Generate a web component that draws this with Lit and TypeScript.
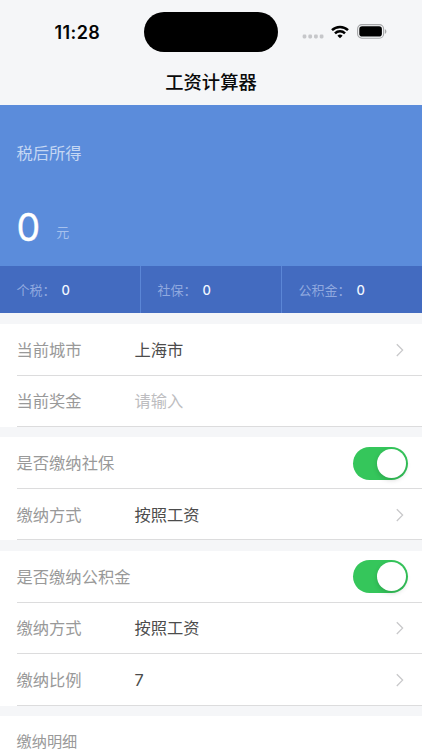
import { LitElement, html, css, svg, nothing } from "lit";
import { customElement, property } from "lit/decorators.js";

type Row = { label: string; value?: string; placeholder?: string; kind: "link" | "input" | "switch" };

const stats = [
  { label: "个税：", value: "0" },
  { label: "社保：", value: "0" },
  { label: "公积金：", value: "0" },
];

const groups: Row[][] = [
  [
    { label: "当前城市", value: "上海市", kind: "link" },
    { label: "当前奖金", placeholder: "请输入", kind: "input" },
  ],
  [
    { label: "是否缴纳社保", kind: "switch" },
    { label: "缴纳方式", value: "按照工资", kind: "link" },
  ],
  [
    { label: "是否缴纳公积金", kind: "switch" },
    { label: "缴纳方式", value: "按照工资", kind: "link" },
    { label: "缴纳比例", value: "7", kind: "link" },
  ],
];

@customElement("status-bar")
class StatusBar extends LitElement {
  static styles = css`
    :host { display: grid; grid-template-columns: 144px 134px 1fr; height: 64px; box-sizing: border-box; padding-top: 12px; }
    .time { padding-left: 54.5px; font: 600 18px/41px Inter, sans-serif; letter-spacing: 0.4px; color: #050505; }
    .island { height: 40px; border-radius: 20px; background: #000; }
    .icons { display: flex; height: 40px; align-items: center; padding-left: 24px; }
    .dots { width: 22px; height: 5px; margin-top: 9px; }
    .wifi { width: 18px; height: 14px; margin: -1px 0 0 7px; }
    .battery { width: 30px; height: 15px; margin: -1px 0 0 8px; }
  `;
  render() {
    return html`
      <div class="time">11:28</div>
      <div class="island"></div>
      <div class="icons">
        <svg class="dots" viewBox="0 0 22 5" fill="#c6c7ca">
          ${[2.5, 8.2, 13.9, 19.6].map((x) => svg`<rect x=${x - 1.9} y="0.6" width="3.8" height="3.8" rx="1.3"/>`)}
        </svg>
        <svg class="wifi" viewBox="0 0 18 14" fill="none" stroke="#000" stroke-width="2.5">
          <path d="M1 5.2A11.4 11.4 0 0 1 17 5.2"/>
          <path d="M4 8.4A7.1 7.1 0 0 1 14 8.4"/>
          <path d="M9 13.3L6.4 10.7A3.8 3.8 0 0 1 11.6 10.7Z" fill="#000" stroke="none"/>
        </svg>
        <svg class="battery" viewBox="0 0 30 15">
          <rect x="0.6" y="0.6" width="26" height="13.6" rx="4.3" fill="none" stroke="#a5a6a8" stroke-width="1.1"/>
          <rect x="2.3" y="2.3" width="22.6" height="10.2" rx="2.8" fill="#000"/>
          <path d="M27.9 5.2C29.9 5.9 29.9 9 27.9 9.7Z" fill="#a5a6a8"/>
        </svg>
      </div>
    `;
  }
}

@customElement("form-row")
class FormRow extends LitElement {
  @property({ attribute: false }) row!: Row;
  static styles = css`
    :host { display: block; padding-left: 16.5px; }
    .row { display: flex; align-items: center; box-sizing: border-box; height: 51.5px; padding-top: 1px; border-bottom: 1px solid #dcdcdd; }
    .label { width: 118px; color: #999; white-space: nowrap; }
    .value { flex: 1; color: #4c4c4c; }
    .hint { color: #bdbdc0; }
    .arrow { width: 8px; height: 14px; margin-right: 18.5px; }
    .switch { display: flex; justify-content: flex-end; align-items: center; box-sizing: border-box; width: 55px; height: 33px; padding: 2px; margin-right: 14px; border-radius: 17px; background: #35c65b; }
    .knob { width: 29px; height: 29px; border-radius: 50%; background: #fff; box-shadow: 0 2px 5px rgba(0, 0, 0, 0.16); }
  `;
  render() {
    const { label, value, placeholder, kind } = this.row;
    return html`<div class="row">
      <span class="label">${label}</span>
      <span class="value ${placeholder ? "hint" : ""}">${value ?? placeholder ?? ""}</span>
      ${kind === "link"
        ? html`<svg class="arrow" viewBox="0 0 8 14" fill="none" stroke="#c8c8ca" stroke-width="1.3"><path d="M0.8 1.2L6.6 7.1L0.8 13"/></svg>`
        : nothing}
      ${kind === "switch" ? html`<div class="switch"><div class="knob"></div></div>` : nothing}
    </div>`;
  }
}

@customElement("app-root")
class AppRoot extends LitElement {
  static styles = css`
    :host { display: block; height: 750px; overflow: hidden; background: #f5f6f8; font: 400 16.3px/24px Inter, "Noto Sans CJK SC", sans-serif; }
    .title { height: 41px; font-size: 18.3px; font-weight: 500; line-height: 36px; text-align: center; color: #0a0a0a; }
    .income { height: 161px; box-sizing: border-box; padding: 36px 16.5px 0; background: #5b8cdb; }
    .caption { color: #c5d7f3; }
    .amount { display: flex; align-items: center; margin-top: 36px; line-height: 46px; }
    .number { font-size: 37.5px; font-weight: 400; color: #fff; -webkit-text-stroke: 0.3px #fff; }
    .unit { margin: 8px 0 0 16px; font-size: 13px; color: #a6c1ed; }
    .stats { display: grid; grid-template-columns: 140px 141px 1fr; height: 47px; background: #436bc0; }
    .stat { display: flex; align-items: center; padding-left: 16.5px; font-size: 13px; color: #90a9df; }
    .stat + .stat { border-left: 1px solid #5b86d6; padding-left: 16.5px; }
    .figure { margin-left: 6px; font-weight: 450; color: #f2f6ff; }
    .group { margin-top: 10.3px; background: #fff; }
    .first { margin-top: 11px; }
    .third { margin-top: 10.8px; }
    .details { height: 60px; box-sizing: border-box; padding: 14.4px 16.5px 0; font-size: 15.2px; color: #999; }
  `;
  render() {
    return html`
      <status-bar></status-bar>
      <div class="title">工资计算器</div>
      <div class="income">
        <div class="caption">税后所得</div>
        <div class="amount"><span class="number">0</span><span class="unit">元</span></div>
      </div>
      <div class="stats">
        ${stats.map((s) => html`<div class="stat"><span>${s.label}</span><span class="figure">${s.value}</span></div>`)}
      </div>
      ${groups.map((g, i) => html`<div class="group ${["first", "", "third"][i]}">${g.map((r) => html`<form-row .row=${r}></form-row>`)}</div>`)}
      <div class="group details">缴纳明细</div>
    `;
  }
}
